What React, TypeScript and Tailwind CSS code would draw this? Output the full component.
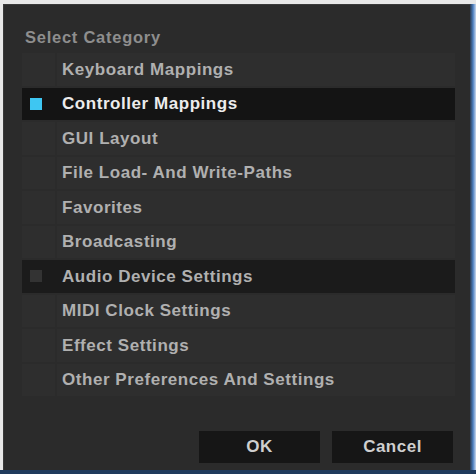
import React from "react";

const items = [
  { label: "Keyboard Mappings", state: "none" },
  { label: "Controller Mappings", state: "active" },
  { label: "GUI Layout", state: "none" },
  { label: "File Load- And Write-Paths", state: "none" },
  { label: "Favorites", state: "none" },
  { label: "Broadcasting", state: "none" },
  { label: "Audio Device Settings", state: "dim" },
  { label: "MIDI Clock Settings", state: "none" },
  { label: "Effect Settings", state: "none" },
  { label: "Other Preferences And Settings", state: "none" },
];

export default function App() {
  return (
    <div
      className="w-[476px] h-[474px] bg-[#e8e8e8] overflow-hidden flex flex-col"
      style={{ fontFamily: '"Liberation Sans", Arial, sans-serif' }}
    >
      <div className="flex flex-1 mt-[4px] ml-[3px]">
        <div className="flex-1 flex flex-col bg-[#2b2b2b] border-l border-t border-[#3a3a3a]">
          <div className="pl-[21px] pt-[24px] h-[48px] text-[16.5px] font-bold tracking-[0.75px] text-[#8e8e8e] leading-none">
            Select Category
          </div>
          <div className="flex flex-col gap-[2px] ml-[18px] mr-[15px]">
            {items.map((it) => {
              const active = it.state === "active";
              const dim = it.state === "dim";
              const dark = active || dim;
              return (
                <div key={it.label} className="flex h-[32.5px] gap-[2px]">
                  <div
                    className={`w-[33px] flex items-center justify-center ${
                      active ? "bg-[#141414]" : dim ? "bg-[#1b1b1b]" : "bg-[#2e2e2e]"
                    }`}
                  >
                    {active && <div className="w-[12px] h-[12px] bg-[#3ec6f2] ml-[-6px]" />}
                    {dim && <div className="w-[12px] h-[12px] bg-[#333333] ml-[-6px]" />}
                  </div>
                  <div
                    className={`flex-1 flex items-center pl-[5px] text-[17px] font-bold tracking-[0.55px] ${
                      active
                        ? "bg-[#141414] text-[#ececec]"
                        : dim
                        ? "bg-[#1b1b1b] text-[#b0b0b0]"
                        : "bg-[#2e2e2e] text-[#b0b0b0]"
                    } ${dark ? "ml-[-2px] pl-[7px]" : ""}`}
                  >
                    {it.label}
                  </div>
                </div>
              );
            })}
          </div>
          <div className="flex justify-end gap-[12px] mr-[17px] mt-[35px]">
            <button className="w-[121px] h-[32px] bg-[#161616] text-[#cfcfcf] text-[17px] font-bold tracking-[0.5px]">
              OK
            </button>
            <button className="w-[121px] h-[32px] bg-[#161616] text-[#cfcfcf] text-[17px] font-bold tracking-[0.5px]">
              Cancel
            </button>
          </div>
          <div className="flex-1" />
        </div>
        <div className="w-[6px] bg-gradient-to-r from-[#2a3a50] via-[#4a7ec0] to-[#c8d8ee]" />
      </div>
      <div className="h-[4px] bg-[#1f3a5c]" />
    </div>
  );
}
